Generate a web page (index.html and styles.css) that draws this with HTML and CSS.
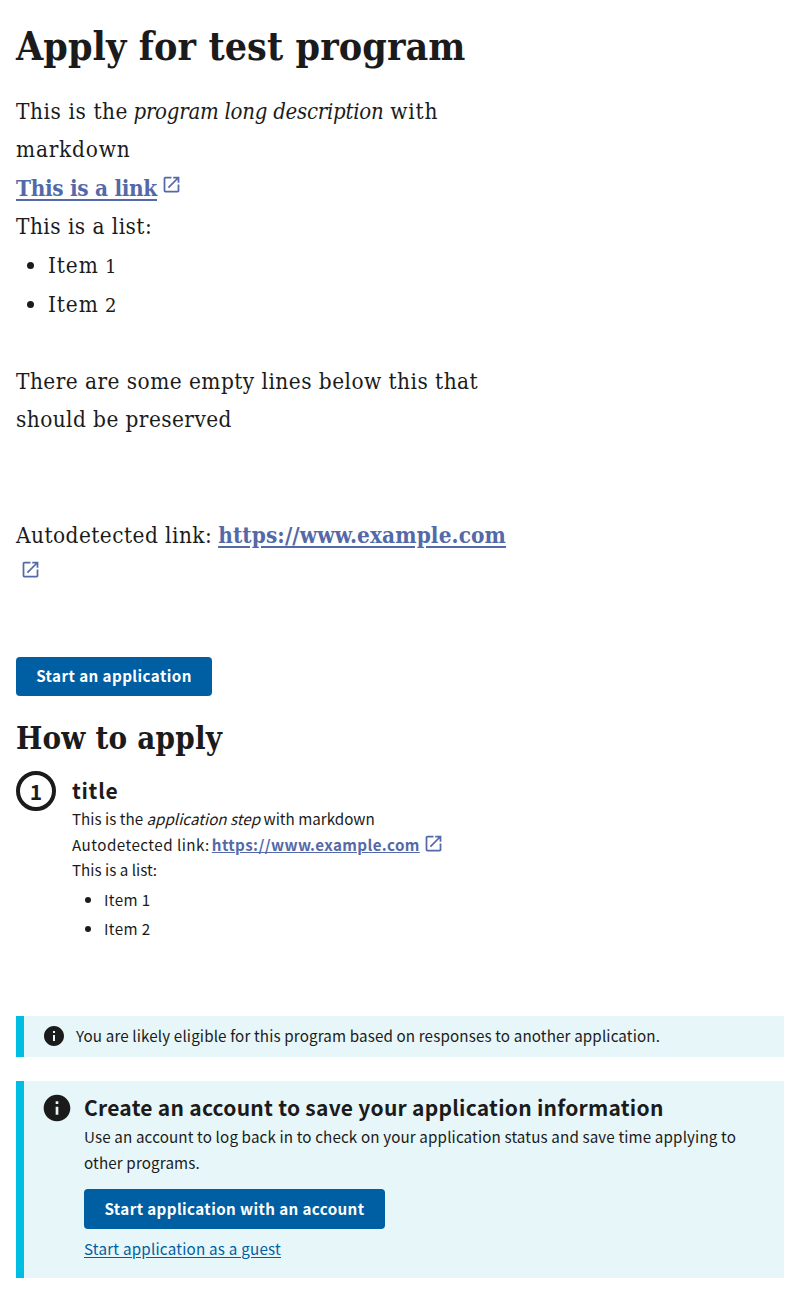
FILE: index.html
```
<!DOCTYPE html>
<html lang="en">
<head>
<meta charset="utf-8">
<title>Apply for test program</title>
<link rel="stylesheet" href="styles.css">
</head>
<body>
<svg class="defs" aria-hidden="true">
  <symbol id="launch" viewBox="0 0 24 24"><path d="M19 19H5V5h7V3H5a2 2 0 0 0-2 2v14a2 2 0 0 0 2 2h14c1.100 0 2-.9 2-2v-7h-2v7zM14 3v2h3.590l-9.830 9.830 1.410 1.410L19 6.410V10h2V3h-7z"/></symbol>
  <symbol id="info" viewBox="0 0 24 24"><path d="M12 2C6.480 2 2 6.480 2 12s4.480 10 10 10 10-4.480 10-10S17.520 2 12 2zm1 15h-2v-6h2v6zm0-8h-2V7h2v2z"/></symbol>
</svg>
<main class="page">
  <h1 class="heading">Apply for test program</h1>
  <section class="description">
    <p class="line"><span class="t-intro">This is the</span> <em>program long description</em> <span class="t-with">with</span></p>
    <p class="line t-markdown">markdown</p>
    <p class="line"><a class="ext t-link" href="#">This is a link</a><svg class="launch inline"><use href="#launch"/></svg></p>
    <p class="line">This is a list:</p>
    <ul class="items">
      <li>Item <span class="digit">1</span></li>
      <li>Item <span class="digit">2</span></li>
    </ul>
    <p class="line after-list">There are some empty lines below this that</p>
    <p class="line t-should">should be preserved</p>
    <p class="line after-gap">Autodetected link: <a class="ext t-url" href="#">https://www.example.com</a></p>
    <p class="line"><svg class="launch wrapped"><use href="#launch"/></svg></p>
  </section>
  <a class="button start" href="#">Start an application</a>
  <h2 class="subheading">How to apply</h2>
  <section class="step">
    <div class="number">1</div>
    <div class="step-body">
      <h3 class="step-title">title</h3>
      <p class="text">This is the <em>application step</em> with markdown</p>
      <p class="text t-auto"><span>Autodetected link:</span><a class="ext" href="#">https://www.example.com</a><svg class="launch"><use href="#launch"/></svg></p>
      <p class="text">This is a list:</p>
      <ul class="step-items"><li>Item 1</li><li>Item 2</li></ul>
    </div>
  </section>
  <section class="alert slim">
    <svg class="info"><use href="#info"/></svg>
    <p class="text">You are likely eligible for this program based on responses to another application.</p>
  </section>
  <section class="alert account">
    <svg class="info"><use href="#info"/></svg>
    <div>
      <h3 class="alert-title">Create an account to save your application information</h3>
      <p class="text">Use an account to log back in to check on your application status and save time applying to<br>other programs.</p>
      <a class="button with-account" href="#">Start application with an account</a>
      <a class="guest" href="#">Start application as a guest</a>
    </div>
  </section>
</main>
</body>
</html>
```
FILE: styles.css
```
* { box-sizing: border-box; }
body { margin: 0; background: #fff; color: #1b1b1b; font: 15.2px/25.7px "Noto Sans CJK SC", "Noto Sans", sans-serif; }
h1, h2, h3, p, ul { margin: 0; padding: 0; }
svg { fill: currentColor; }
.defs { display: none; }
.page { padding: 19.8px 16px 24px; display: flex; flex-direction: column; align-items: flex-start; white-space: nowrap; }
.heading, .subheading, .description { font-family: "DejaVu Serif Condensed", "DejaVu Serif", serif; font-stretch: condensed; }
.heading { font-size: 39px; line-height: 52px; letter-spacing: .1px; }
.subheading { font-size: 31px; line-height: 40px; letter-spacing: .2px; margin-top: 22px; }

.description { margin-top: 20px; font-size: 22.4px; line-height: 38.55px; letter-spacing: .46px; }
.line { height: 38.55px; }
.line.after-list { margin-top: 38.55px; }
.line.after-gap { margin-top: 77.1px; }
.description em { font-size: 22px; letter-spacing: -.25px; }
.t-intro { letter-spacing: .58px; margin-right: -1.5px; }
.t-with { letter-spacing: .8px; }
.t-markdown { letter-spacing: .78px; }
.t-should { letter-spacing: .42px; }
.ext { color: #5469a8; font-weight: 700; }
.description .ext { text-decoration-thickness: 2px; text-underline-offset: 3px; }
.t-link { letter-spacing: -.33px; }
.t-url { letter-spacing: .11px; margin-left: -1px; }
.launch { width: 21px; height: 21px; color: #5469a8; margin-left: 4px; vertical-align: -2px; }
.launch.inline { vertical-align: 1px; margin-top: -3px; margin-left: 3.5px; }
.launch.wrapped { vertical-align: 1px; margin-left: 3.5px; }
.items { padding-left: 32px; }
.items li { height: 38.55px; letter-spacing: .9px; }
.digit { font-family: "DejaVu Serif", serif; font-size: 18px; line-height: 1; font-stretch: normal; letter-spacing: 0; margin-left: -1px; }

.button { display: flex; align-items: center; justify-content: center; background: #005ea2; color: #fff; border-radius: 4px; font-weight: 700; line-height: 16px; padding-bottom: 3px; text-decoration: none; }
.start { width: 196px; height: 39px; margin-top: 64.2px; letter-spacing: .42px; }

.step { display: flex; gap: 16px; margin-top: 13px; }
.number { width: 40px; height: 40px; border: 4px solid #1b1b1b; border-radius: 50%; text-align: center; font-size: 21px; line-height: 33px; font-weight: 700; }
.step-title { font-size: 21px; line-height: 28px; letter-spacing: .7px; padding-top: 5px; height: 35px; }
.t-auto { display: flex; align-items: center; height: 25.7px; letter-spacing: .46px; }
.t-auto .ext { margin-left: 2px; letter-spacing: .38px; }
.t-auto .launch { margin: -2px 0 0 3.5px; }
.step-items { padding: 2px 0 0 32px; letter-spacing: .4px; }
.step-items li { line-height: 29px; }

.alert { width: 100%; display: flex; background: #e7f6f8; border-left: 8px solid #00bde3; letter-spacing: .13px; }
.slim { height: 41px; margin-top: 72.7px; padding-left: 18px; align-items: center; }
.slim .info { width: 24px; height: 24px; margin-right: 10px; }
.slim .text { margin-top: -2px; }
.account { height: 197px; margin-top: 24px; padding: 9px 0 0 17px; }
.account .info { width: 32px; height: 32px; margin: 2px 11px 0 0; }
.alert-title { font-size: 21px; line-height: 34px; letter-spacing: .26px; }
.account .text { padding-top: .6px; }
.with-account { width: 301px; height: 40px; margin-top: 13.4px; letter-spacing: .38px; }
.guest { display: block; margin-top: 6.500px; color: #005ea2; letter-spacing: .22px; text-underline-offset: 2px; }
```
